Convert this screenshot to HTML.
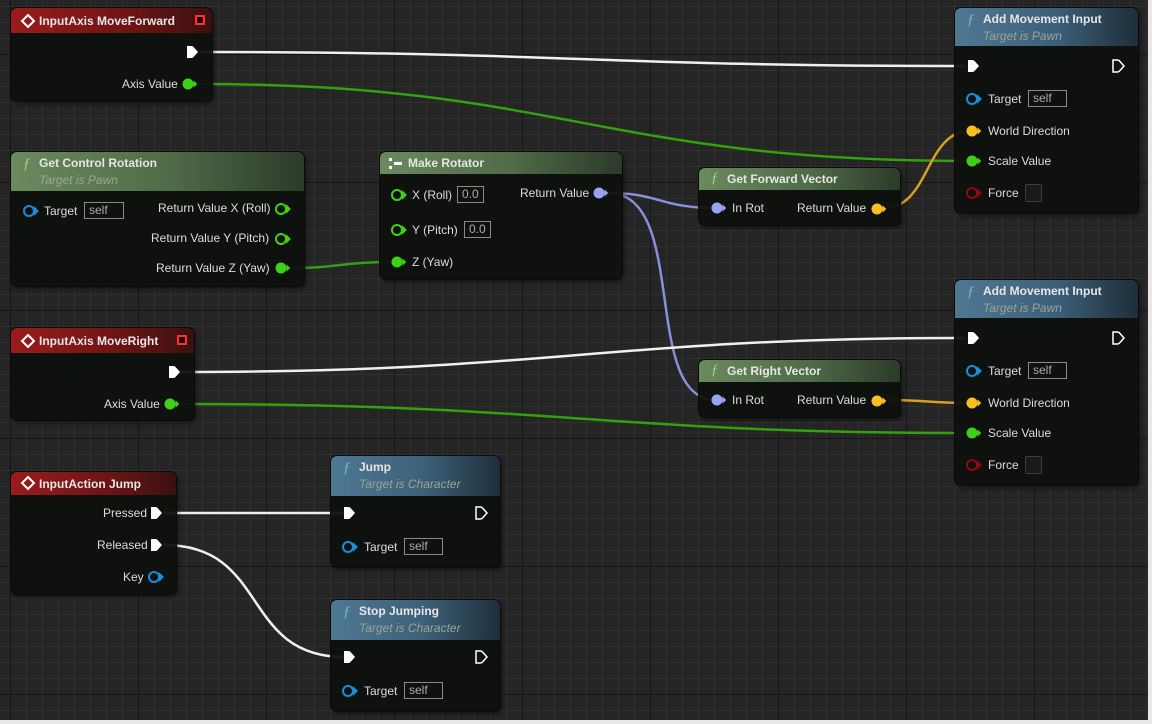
<!DOCTYPE html>
<html><head><meta charset="utf-8"><style>
*{margin:0;padding:0;box-sizing:border-box}
body{width:1152px;height:724px;overflow:hidden;background:#252525;font-family:"Liberation Sans",sans-serif;font-size:12px;color:#dcdcdc;position:relative}
#grid{position:absolute;left:0;top:0;width:1152px;height:724px;
background-image:
linear-gradient(to right,#161616 1px,transparent 1px),
linear-gradient(to bottom,#161616 1px,transparent 1px),
linear-gradient(to right,#303030 1px,transparent 1px),
linear-gradient(to bottom,#303030 1px,transparent 1px);
background-size:128px 128px,128px 128px,16px 16px,16px 16px;
background-position:10px 0,0 54px,10px 0,0 6px}
.n{position:absolute;background:rgba(14,16,14,0.95);border-radius:6px;box-shadow:0 0 0 1px #0a0a0a,2px 3px 4px rgba(0,0,0,.5);overflow:hidden}
.h{position:absolute;left:0;top:0;right:0;padding:4px 0 0 28px;font-weight:bold;color:#e6e6e6;font-size:12px}
.h .s{font-weight:normal;font-style:italic;color:#9aa594;display:block;margin-top:3px}
.red{background:linear-gradient(to right,#9a1c1c,#6c1414 60%,#3a1010)}
.grn{background:linear-gradient(to right,#6b8a5e,#4f6b47 55%,#2c3a2a)}
.blu{background:linear-gradient(to right,#4f7893,#3d6079 55%,#1e2e3a)}
.fi{position:absolute;left:12px;top:4px;font-style:italic;font-weight:normal;font-family:"Liberation Serif",serif;font-size:15px}
.t{position:absolute;white-space:nowrap;color:#dcdcdc}
.box{position:absolute;border:1px solid #8a8a8a;color:#aaa;padding:0 4px;height:17px;line-height:15px;font-size:12px}
.fb{position:absolute;left:70px;width:17px;height:18px;border:1px solid #3c3c3c;background:#1a1a1a;border-radius:2px}
#frame{position:absolute;right:0;top:0;width:4px;height:724px;background:#e8e8e8}
#frameb{position:absolute;left:0;bottom:0;width:1152px;height:4px;background:#e8e8e8}
</style></head><body>
<div id="grid"></div>
<svg style="position:absolute;left:0;top:0" width="1152" height="724">
<g fill="none" stroke-width="2.5">
<path d="M200,52 C560,52 600,66 965,66" stroke="#f0f0f0"/>
<path d="M198,84 C560,84 600,161 970,161" stroke="#33a010"/>
<path d="M884,208 C930,208 925,131 970,131" stroke="#d8a020"/>
<path d="M290,268 C340,268 340,262 393,262" stroke="#33a010"/>
<path d="M608,193 C660,193 660,208 716,208" stroke="#8890d8"/>
<path d="M608,193 C690,193 640,400 716,400" stroke="#8890d8"/>
<path d="M884,400 C930,400 925,403 970,403" stroke="#d8a020"/>
<path d="M180,372 C560,372 600,338 965,338" stroke="#f0f0f0"/>
<path d="M180,404 C560,404 600,433 970,433" stroke="#33a010"/>
<path d="M164,513 C250,513 260,513 345,513" stroke="#f0f0f0"/>
<path d="M164,545 C270,545 240,657 345,657" stroke="#f0f0f0"/>
</g></svg>

<div class="n" style="left:11px;top:8px;width:201px;height:93px"><div class="h red" style="height:25px;padding-top:6px">InputAxis MoveForward</div>
<div style="position:absolute;left:184px;top:7px;width:10px;height:10px;border:2px solid #ff3030;background:#200"></div></div>
<div class="t" style="left:122px;top:77px">Axis Value</div>

<div class="n" style="left:11px;top:152px;width:293px;height:134px"><div class="h grn" style="height:39px">Get Control Rotation<span class="s">Target is Pawn</span><span class="fi" style="color:#a8d090">ƒ</span></div></div>
<div class="t" style="left:44px;top:204px">Target</div><div class="box" style="left:84px;top:202px;width:40px">self</div>
<div class="t" style="left:158px;top:201px">Return Value X (Roll)</div>
<div class="t" style="left:151px;top:231px">Return Value Y (Pitch)</div>
<div class="t" style="left:156px;top:261px">Return Value Z (Yaw)</div>

<div class="n" style="left:380px;top:152px;width:242px;height:127px"><div class="h grn" style="height:22px;padding-top:4px">Make Rotator</div></div>
<div class="t" style="left:412px;top:188px">X (Roll)</div><div class="box" style="left:457px;top:186px;width:27px">0.0</div>
<div class="t" style="left:412px;top:223px">Y (Pitch)</div><div class="box" style="left:464px;top:221px;width:27px">0.0</div>
<div class="t" style="left:412px;top:255px">Z (Yaw)</div>
<div class="t" style="left:520px;top:186px">Return Value</div>

<div class="n" style="left:699px;top:168px;width:201px;height:57px"><div class="h grn" style="height:22px;padding-top:4px">Get Forward Vector<span class="fi" style="color:#a8d090;top:2px">ƒ</span></div></div>
<div class="t" style="left:732px;top:201px">In Rot</div><div class="t" style="left:797px;top:201px">Return Value</div>

<div class="n" style="left:699px;top:360px;width:201px;height:57px"><div class="h grn" style="height:22px;padding-top:4px">Get Right Vector<span class="fi" style="color:#a8d090;top:2px">ƒ</span></div></div>
<div class="t" style="left:732px;top:393px">In Rot</div><div class="t" style="left:797px;top:393px">Return Value</div>

<div class="n" style="left:955px;top:8px;width:183px;height:205px"><div class="h blu" style="height:38px">Add Movement Input<span class="s">Target is Pawn</span><span class="fi" style="color:#70b8e8">ƒ</span></div>
<div class="fb" style="top:176px"></div></div>
<div class="t" style="left:988px;top:92px">Target</div><div class="box" style="left:1028px;top:90px;width:39px">self</div>
<div class="t" style="left:988px;top:124px">World Direction</div>
<div class="t" style="left:988px;top:154px">Scale Value</div>
<div class="t" style="left:988px;top:186px">Force</div>

<div class="n" style="left:955px;top:280px;width:183px;height:205px"><div class="h blu" style="height:38px">Add Movement Input<span class="s">Target is Pawn</span><span class="fi" style="color:#70b8e8">ƒ</span></div>
<div class="fb" style="top:176px"></div></div>
<div class="t" style="left:988px;top:364px">Target</div><div class="box" style="left:1028px;top:362px;width:39px">self</div>
<div class="t" style="left:988px;top:396px">World Direction</div>
<div class="t" style="left:988px;top:426px">Scale Value</div>
<div class="t" style="left:988px;top:458px">Force</div>

<div class="n" style="left:11px;top:328px;width:183px;height:92px"><div class="h red" style="height:25px;padding-top:6px">InputAxis MoveRight</div>
<div style="position:absolute;left:166px;top:7px;width:10px;height:10px;border:2px solid #ff3030;background:#200"></div></div>
<div class="t" style="left:104px;top:397px">Axis Value</div>

<div class="n" style="left:11px;top:472px;width:165px;height:122px"><div class="h red" style="height:23px;padding-top:5px">InputAction Jump</div></div>
<div class="t" style="left:103px;top:506px">Pressed</div>
<div class="t" style="left:97px;top:538px">Released</div>
<div class="t" style="left:123px;top:570px">Key</div>

<div class="n" style="left:331px;top:456px;width:169px;height:111px"><div class="h blu" style="height:40px">Jump<span class="s">Target is Character</span><span class="fi" style="color:#70b8e8">ƒ</span></div></div>
<div class="t" style="left:364px;top:540px">Target</div><div class="box" style="left:404px;top:538px;width:39px">self</div>

<div class="n" style="left:331px;top:600px;width:169px;height:111px"><div class="h blu" style="height:40px">Stop Jumping<span class="s">Target is Character</span><span class="fi" style="color:#70b8e8">ƒ</span></div></div>
<div class="t" style="left:364px;top:684px">Target</div><div class="box" style="left:404px;top:682px;width:39px">self</div>

<svg style="position:absolute;left:0;top:0" width="1152" height="724">
<defs>
<path id="ex" d="M-5,-6 h4 q2,0 3,1.5 l4,4.5 l-4,4.5 q-1,1.5 -3,1.5 h-4 z"/>
<g id="dp"><circle r="5"/><path d="M6,-2.5 L8.5,0 L6,2.5z"/></g>
</defs>
<g fill="none" stroke="#fff" stroke-width="2">
<path d="M28,15 l6,6 l-6,6 l-6,-6z"/><path d="M28,335 l6,6 l-6,6 l-6,-6z"/><path d="M28,477 l6,6 l-6,6 l-6,-6z"/>
</g>
<g fill="#fff" stroke="none">
<path d="M389,158 h3 v3 h-3z M389,166 h3 v3 h-3z M394,162 h8 v3 h-8z"/>
<use href="#ex" x="192" y="52"/><use href="#ex" x="174" y="372"/>
<use href="#ex" x="156" y="513"/><use href="#ex" x="156" y="545"/>
<use href="#ex" x="973" y="66"/><use href="#ex" x="973" y="338"/>
<use href="#ex" x="349" y="513"/><use href="#ex" x="349" y="657"/>
</g>
<g fill="none" stroke="#fff" stroke-width="1.5">
<use href="#ex" x="1118" y="66"/><use href="#ex" x="1118" y="338"/>
<use href="#ex" x="481" y="513"/><use href="#ex" x="481" y="657"/>
</g>
<g fill="#3fd018" stroke="#3fd018" stroke-width="1"><use href="#dp" x="188" y="84"/><use href="#dp" x="170" y="404"/><use href="#dp" x="281" y="268"/><use href="#dp" x="397" y="262"/><use href="#dp" x="972" y="161"/><use href="#dp" x="972" y="433"/></g>
<g fill="none" stroke="#3fd018" stroke-width="2"><use href="#dp" x="281" y="209"/><use href="#dp" x="281" y="239"/><use href="#dp" x="397" y="195"/><use href="#dp" x="397" y="230"/></g>
<g fill="none" stroke="#1a8ed8" stroke-width="2"><use href="#dp" x="29" y="211"/><use href="#dp" x="972" y="99"/><use href="#dp" x="972" y="371"/><use href="#dp" x="348" y="547"/><use href="#dp" x="348" y="691"/><use href="#dp" x="154" y="577"/></g>
<g fill="#98a4f0" stroke="#98a4f0"><use href="#dp" x="599" y="193"/><use href="#dp" x="717" y="208"/><use href="#dp" x="717" y="400"/></g>
<g fill="#f8c020" stroke="#f8c020"><use href="#dp" x="877" y="209"/><use href="#dp" x="877" y="401"/><use href="#dp" x="972" y="131"/><use href="#dp" x="972" y="403"/></g>
<g fill="none" stroke="#8a0c0c" stroke-width="2"><use href="#dp" x="972" y="193"/><use href="#dp" x="972" y="465"/></g>
</svg>
<div id="frame"></div><div id="frameb"></div>
</body></html>
